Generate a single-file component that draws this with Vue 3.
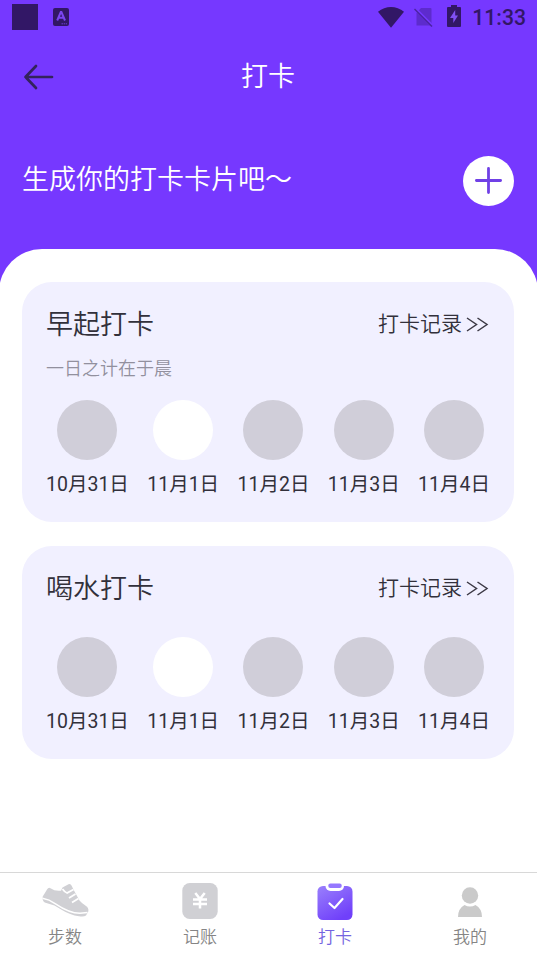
<template>
  <div class="page">
    <header class="top">
      <div class="status">
        <span class="block"></span>
        <svg class="app-icon" width="16" height="18" viewBox="0 0 16 18">
          <rect width="16" height="18" rx="2" fill="#321766" />
          <path d="M4.2 12.500 7.800 4h.6l3.600 8.500M5.600 9.800h5" fill="none" stroke="#7a45f0" stroke-width="2" />
          <path d="M8.500 15.800H14" stroke="#6a3bd5" stroke-width="1" stroke-dasharray="1.500 .7" />
        </svg>
        <svg class="wifi" width="26" height="21" viewBox="0 0 26 21">
          <path d="M0 4.800C7.500-1.500 18.500-1.500 26 4.800L13 20.800Z" fill="#321766" />
        </svg>
        <svg class="sim" width="20" height="20" viewBox="0 0 20 20">
          <path d="M7 1h9.500q1 0 1 1v16.500h-15V6Z" fill="#5d2bcd" />
          <path d="M.8 1.200 18.800 19.200" stroke="#7638ff" stroke-width="3" />
          <path d="M.5 2 18 19.500" stroke="#4b22a3" stroke-width="1.500" />
        </svg>
        <svg class="battery" width="14" height="22" viewBox="0 0 14 22">
          <path d="M4 0h6v2h3q1 0 1 1v18q0 1-1 1H1q-1 0-1-1V3q0-1 1-1h3Z" fill="#321766" />
          <path d="M8.200 5 3 13h3.300v5L11 10.500H8.200Z" fill="#8050f5" />
        </svg>
        <span class="time">11:33</span>
      </div>
      <div class="nav">
        <svg class="back" width="32" height="28" viewBox="0 0 32 28">
          <path d="M13 3 2.500 14 13 25M2.500 14H29" fill="none" stroke="#33235c" stroke-width="2.700" stroke-linecap="round" stroke-linejoin="round" />
        </svg>
        <h1>打卡</h1>
      </div>
      <div class="create">
        <span>生成你的打卡卡片吧～</span>
        <button class="add">
          <svg width="27" height="27" viewBox="0 0 27 27">
            <path d="M13.500 1.400v24.200M1.400 13.500h24.200" stroke="#7040e6" stroke-width="2.800" stroke-linecap="round" />
          </svg>
        </button>
      </div>
    </header>

    <main class="sheet">
      <section v-for="card in cards" :key="card.title" class="card">
        <div class="card-head">
          <h2>{{ card.title }}</h2>
          <span class="record">
            打卡记录
            <svg width="23" height="15" viewBox="0 0 23 15">
              <path d="M1 1 10.500 7.500 1 14M11.500 1 21 7.500 11.500 14" fill="none" stroke="#3c3945" stroke-width="1.500" />
            </svg>
          </span>
        </div>
        <p v-if="card.desc" class="desc">{{ card.desc }}</p>
        <div class="days">
          <div v-for="(day, i) in days" :key="day" class="day">
            <i class="dot" :class="{ today: i === 1 }"></i>
            <span>{{ day }}</span>
          </div>
        </div>
      </section>
    </main>

    <footer class="tabs">
      <div v-for="tab in tabs" :key="tab.name" class="tab" :class="{ active: tab.name === '打卡' }">
        <svg v-if="tab.icon === 'shoe'" width="48" height="40" viewBox="0 0 48 40">
          <path d="M1.700 15.500Q4 12 6 8.500 7.500 6 9.500 7.200 14 10.500 20 9.700L21.500 6.500 27.500 3.200Q29.500 2.200 30.500 4.500L33 9.500 38.500 19.500Q41 22.500 45 25 48 27 47.300 30.500L45 34.500Q43 36.200 38 35.300 29 34 21 29L13.500 24.500 4.500 21.800Q1 20.500 1.700 15.500Z" fill="#d0d0d4" />
          <path d="M1.500 17.300Q8 18.300 14.500 22.800 28 32 39 32.300L46.500 31.500" fill="none" stroke="#fff" stroke-width="1.500" />
          <path d="M21.500 8Q24 11.500 26 12L32.500 8.500M28 17l6.500-4M31 21.500l6.500-4" fill="none" stroke="#fff" stroke-width="1.800" />
        </svg>
        <svg v-else-if="tab.icon === 'bill'" width="48" height="40" viewBox="0 0 48 40">
          <rect x="6.300" y="2" width="35.400" height="36" rx="7.500" fill="#d0d0d4" />
          <path d="m19.300 12 4.700 6 4.700-6M17 18.500h14M17 23h14M24 18v9.500" fill="none" stroke="#fff" stroke-width="2.500" />
        </svg>
        <svg v-else-if="tab.icon === 'check'" width="48" height="40" viewBox="0 0 48 40">
          <defs>
            <linearGradient id="clip" x1="0" y1="0" x2=".6" y2="1">
              <stop offset="0" stop-color="#9a80fc" />
              <stop offset="1" stop-color="#7040fa" />
            </linearGradient>
          </defs>
          <rect x="6.500" y="5" width="35" height="34" rx="5.500" fill="url(#clip)" />
          <rect x="14.500" y="-1" width="18.500" height="11" rx="5" fill="#fff" />
          <rect x="17.300" y="2.500" width="13.400" height="4.500" rx="2" fill="#9578ff" />
          <path d="m18.500 22.500 5 4.500 8-9" fill="none" stroke="#fff" stroke-width="2.200" stroke-linecap="round" stroke-linejoin="round" />
        </svg>
        <svg v-else width="48" height="40" viewBox="0 0 48 40">
          <circle cx="24" cy="14.500" r="8.200" fill="#cacaca" />
          <path d="M12 36Q12 27.500 18.500 24q5.500 3 11 0Q36 27.500 36 36Z" fill="#cacaca" />
        </svg>
        <span>{{ tab.name }}</span>
      </div>
    </footer>
  </div>
</template>

<script setup>
import { ref } from 'vue'

const cards = ref([
  { title: '早起打卡', desc: '一日之计在于晨' },
  { title: '喝水打卡', desc: '' }
])

const days = ['10月31日', '11月1日', '11月2日', '11月3日', '11月4日']

const tabs = [
  { name: '步数', icon: 'shoe' },
  { name: '记账', icon: 'bill' },
  { name: '打卡', icon: 'check' },
  { name: '我的', icon: 'user' }
]
</script>

<style>
body {
  margin: 0;
}
</style>

<style scoped>
.page {
  display: flex;
  flex-direction: column;
  height: 957px;
  overflow: hidden;
  background: #fff;
  color: #32303b;
  font-family: Roboto, 'Noto Sans CJK SC', sans-serif;
}
svg {
  display: block;
  flex: none;
}
h1,
h2,
p {
  margin: 0;
  font-weight: 350;
}
.top {
  flex: none;
  height: 291px;
  background: #7638ff;
  color: #fff;
}
.status {
  display: flex;
  align-items: center;
  box-sizing: border-box;
  height: 34px;
  padding: 0 11px 0 12px;
}
.block {
  width: 26px;
  height: 26px;
  background: #321766;
}
.app-icon {
  margin-left: 15px;
}
.wifi {
  margin-left: auto;
}
.sim {
  margin-left: 10px;
}
.battery {
  margin: 0 0 2px 13px;
}
.time {
  margin-left: 11px;
  color: #321766;
  font-size: 21.2px;
  font-weight: 500;
}
.nav {
  display: grid;
  grid-template-columns: 32px 1fr 32px;
  align-items: center;
  height: 84px;
  padding: 0 24px 0 23px;
}
.back {
  margin-top: 2px;
}
h1 {
  padding-top: 2px;
  font-size: 27px;
  line-height: 40px;
  text-align: center;
}
.create {
  display: flex;
  align-items: center;
  justify-content: space-between;
  height: 126px;
  padding: 0 23px 0 22px;
  font-size: 27px;
  font-weight: 350;
}
.create span {
  padding-bottom: 7px;
}
.add {
  display: flex;
  align-items: center;
  justify-content: center;
  width: 51px;
  height: 50px;
  margin-bottom: 1px;
  padding: 0;
  border: none;
  border-radius: 50%;
  background: #fff;
}
.sheet {
  display: flex;
  flex: 1;
  flex-direction: column;
  gap: 24px;
  margin: -42px -1px 0;
  padding: 33px 24px 0 23px;
  border-radius: 43px 43px 0 0;
  background: #fff;
}
.card {
  padding: 22px 24px 25px;
  border-radius: 30px;
  background: #f1f0ff;
}
.card-head {
  display: flex;
  align-items: center;
  justify-content: space-between;
  height: 36px;
}
h2 {
  font-size: 27px;
}
.record {
  display: flex;
  align-items: center;
  gap: 4px;
  margin-right: 1px;
  font-size: 21px;
  font-weight: 350;
}
.record svg {
  margin-top: 5px;
}
.desc {
  margin-top: 15px;
  color: #92909e;
  font-size: 18px;
  line-height: 28px;
}
.days {
  display: flex;
  justify-content: space-between;
  margin-top: 17px;
}
.card-head + .days {
  margin-top: 33px;
}
.day {
  display: flex;
  flex-direction: column;
  align-items: center;
  font-size: 19.5px;
  font-weight: 390;
  line-height: 24px;
}
.dot {
  width: 60px;
  height: 60px;
  margin-bottom: 13px;
  border-radius: 50%;
  background: #d0ced9;
}
.dot.today {
  background: #fff;
}
.tabs {
  display: flex;
  flex: none;
  justify-content: center;
  box-sizing: border-box;
  height: 85px;
  padding-right: 2px;
  border-top: 1px solid #d8d8d8;
  background: #fff;
}
.tab {
  display: flex;
  flex: none;
  flex-direction: column;
  align-items: center;
  box-sizing: border-box;
  width: 135px;
  padding-top: 8px;
  color: #858585;
  font-size: 17px;
  font-weight: 350;
  line-height: 28px;
}
.tab span {
  margin-top: 2px;
}
.tab.active {
  color: #7464e0;
}
</style>
